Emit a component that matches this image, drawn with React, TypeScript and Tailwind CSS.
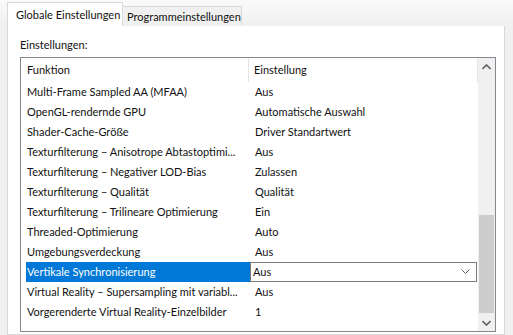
import React from "react";

const rows: [string, string][] = [
  ["Multi-Frame Sampled AA (MFAA)", "Aus"],
  ["OpenGL-rendernde GPU", "Automatische Auswahl"],
  ["Shader-Cache-Größe", "Driver Standartwert"],
  ["Texturfilterung – Anisotrope Abtastoptimi...", "Aus"],
  ["Texturfilterung – Negativer LOD-Bias", "Zulassen"],
  ["Texturfilterung – Qualität", "Qualität"],
  ["Texturfilterung – Trilineare Optimierung", "Ein"],
  ["Threaded-Optimierung", "Auto"],
  ["Umgebungsverdeckung", "Aus"],
  ["Vertikale Synchronisierung", "Aus"],
  ["Virtual Reality – Supersampling mit variabl...", "Aus"],
  ["Vorgerenderte Virtual Reality-Einzelbilder", "1"],
];

export default function App() {
  return (
    <div
      className="w-[513px] h-[335px] overflow-hidden bg-[#f0f0f0] text-[11px] text-[#111] flex flex-col"
      style={{ fontFamily: 'Lato, "Noto Sans", sans-serif' }}
    >
      {/* tabs */}
      <div className="flex items-end h-[26px] pl-[7px] bg-gradient-to-b from-[#fafafa] to-[#f0f0f0] relative z-10">
        <div className="h-[24px] w-[116px] bg-white border border-b-0 border-[#d9d9d9] flex items-center pl-[8px] leading-none whitespace-nowrap">
          Globale Einstellungen
        </div>
        <div className="h-[19px] mb-[1px] w-[119px] bg-[#f0f0f0] border border-l-0 border-b-0 border-[#d9d9d9] flex items-center pl-[4px] leading-none whitespace-nowrap">
          Programmeinstellungen
        </div>
      </div>
      {/* panel */}
      <div className="-mt-px ml-[7px] w-[498px] flex-1 bg-white border border-[#d9d9d9] flex flex-col pl-[12px] pr-[8px]">
        <div className="h-[31px] flex items-center pt-[6px] leading-none">Einstellungen:</div>
        <div className="h-[275px] border border-[#828790] flex overflow-hidden">
          <div className="flex-1 flex flex-col overflow-hidden">
            <div className="h-[24px] shrink-0 flex">
              <div className="w-[228px] pl-[6px] flex items-center border-r border-[#e5e5e5]">Funktion</div>
              <div className="flex-1 pl-[5px] flex items-center border-r border-[#e5e5e5]">Einstellung</div>
            </div>
            {rows.map(([k, v], i) =>
              i === 9 ? (
                <div key={i} className="h-[20px] shrink-0 flex">
                  <div className="w-[229px] pl-[5px] flex items-center">
                    <div className="w-[224px] h-[20px] bg-[#0078d7] text-white flex items-center pl-[1px] whitespace-nowrap overflow-hidden">{k}</div>
                  </div>
                  <div className="w-[227px] h-[20px] border border-[#7a7a7a] flex items-center justify-between pl-[2px] pr-[6px]">
                    <span>{v}</span>
                    <svg width="9" height="6" viewBox="0 0 9 6">
                      <path d="M0.5 0.5 L4.5 4.5 L8.5 0.5" stroke="#606060" fill="none" strokeWidth="1" />
                    </svg>
                  </div>
                </div>
              ) : (
                <div key={i} className="h-[20px] shrink-0 flex">
                  <div className="w-[228px] pl-[6px] flex items-center whitespace-nowrap overflow-hidden">{k}</div>
                  <div className="flex-1 pl-[6px] flex items-center whitespace-nowrap">{v}</div>
                </div>
              )
            )}
          </div>
          {/* scrollbar */}
          <div className="w-[17px] bg-[#f0f0f0] flex flex-col">
            <div className="h-[17px] flex items-center justify-center">
              <svg width="9" height="6" viewBox="0 0 9 6">
                <path d="M0.5 5 L4.5 1 L8.5 5" stroke="#606060" fill="none" strokeWidth="1.6" />
              </svg>
            </div>
            <div className="flex-1 flex flex-col">
              <div className="h-[140px]" />
              <div className="h-[98px] mx-[1px] bg-[#cdcdcd]" />
              <div className="flex-1" />
            </div>
            <div className="h-[17px] flex items-center justify-center">
              <svg width="9" height="6" viewBox="0 0 9 6">
                <path d="M0.5 1 L4.5 5 L8.5 1" stroke="#606060" fill="none" strokeWidth="1.6" />
              </svg>
            </div>
          </div>
        </div>
      </div>
    </div>
  );
}
